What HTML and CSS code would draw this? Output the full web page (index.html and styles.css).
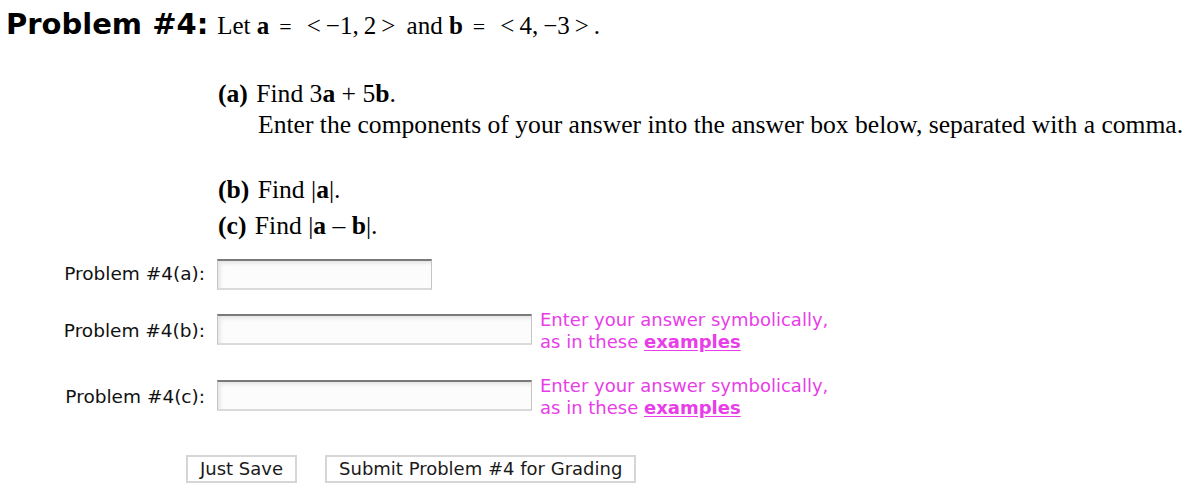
FILE: index.html
```html
<!DOCTYPE html>
<html>
<head>
<meta charset="utf-8">
<link rel="stylesheet" href="styles.css">
</head>
<body>
<div class="page">
  <div class="statement">
    <span class="ptitle">Problem #4:</span>
    <span class="math">Let <b>a</b><span class="eq">=</span><span class="br">&lt;</span>&minus;1,&thinsp;2<span class="br">&gt;</span> and <b>b</b><span class="eq">=</span><span class="br">&lt;</span>4,&thinsp;&minus;3<span class="br">&gt;</span>.</span>
  </div>

  <div class="parts">
    <div class="part part-a">
      <div class="line"><b class="plabel">(a)</b> Find 3<b>a</b> + 5<b>b</b>.</div>
      <div class="line indent">Enter the components of your answer into the answer box below, separated with a comma.</div>
    </div>
    <div class="part part-b">
      <div class="line"><b class="plabel">(b)</b> Find |<b>a</b>|.</div>
    </div>
    <div class="part part-c">
      <div class="line"><b class="plabel">(c)</b> Find |<b>a</b> &ndash; <b>b</b>|.</div>
    </div>
  </div>

  <div class="answers">
    <div class="row row-a">
      <label class="alabel">Problem #4(a):</label>
      <div class="box short"></div>
    </div>
    <div class="row row-b">
      <label class="alabel">Problem #4(b):</label>
      <div class="box long"></div>
      <div class="hint">Enter your answer symbolically,<br>as in these <a class="ex">examples</a></div>
    </div>
    <div class="row row-c">
      <label class="alabel">Problem #4(c):</label>
      <div class="box long"></div>
      <div class="hint">Enter your answer symbolically,<br>as in these <a class="ex">examples</a></div>
    </div>
  </div>

  <div class="buttons">
    <button class="btn">Just Save</button>
    <button class="btn">Submit Problem #4 for Grading</button>
  </div>
</div>
</body>
</html>
```

FILE: styles.css
```css
html, body {
  margin: 0;
  padding: 0;
  background: #ffffff;
  color: #000000;
}

.page {
  width: 1192px;
  height: 492px;
  overflow: hidden;
}

.statement {
  display: flex;
  align-items: baseline;
  gap: 9px;
  box-sizing: border-box;
  height: 46px;
  padding: 7px 0 0 6px;
}

.ptitle {
  font-family: "DejaVu Sans", Verdana, sans-serif;
  font-weight: bold;
  font-size: 29px;
}

.math {
  font-family: "Liberation Serif", "Times New Roman", serif;
  font-size: 25px;
}

.math .eq {
  padding: 0 10px;
  font-size: 22px;
}

.math .br {
  padding: 0 5px;
}

.parts {
  margin: 31.5px 0 0 218px;
  font-family: "Liberation Serif", "Times New Roman", serif;
  font-size: 25.6px;
}

.part .line {
  line-height: 31px;
  white-space: nowrap;
}

.plabel {
  margin-right: 2px;
}

.indent {
  padding-left: 40px;
}

.part-b {
  margin-top: 34px;
}

.part-c {
  margin-top: 5px;
}

.answers {
  margin-top: 18px;
  font-family: "DejaVu Sans", Verdana, sans-serif;
  font-size: 18.5px;
}

.row {
  display: flex;
  align-items: center;
}

.row-b { margin-top: 24px; }
.row-c { margin-top: 35px; }

.alabel {
  width: 205px;
  flex: none;
  text-align: right;
  color: #111;
  position: relative;
  top: 1px;
}

.row-a .alabel {
  top: -1px;
}

.box {
  flex: none;
  margin-left: 12px;
  height: 31px;
  box-sizing: border-box;
  border: 1px solid #c4c4c4;
  border-top: 2px solid #7a7a7a;
  border-bottom: 2px solid #dadada;
  background: #fcfcfc;
  box-shadow: inset 4px 4px 4px -2px #e2e2e2;
}

.short { width: 215px; }
.long { width: 315px; }

.hint {
  align-self: flex-start;
  margin: -5px 0 -8px 8px;
  color: #e83de8;
  font-size: 18px;
  line-height: 22px;
}

.ex {
  color: #e83de8;
  font-weight: bold;
  text-decoration: underline;
  text-underline-offset: 2px;
}

.buttons {
  margin: 44px 0 0 186px;
  display: flex;
  gap: 28px;
}

.btn {
  font-family: "DejaVu Sans", Verdana, sans-serif;
  font-size: 18px;
  color: #1a1a1a;
  background: #ffffff;
  border: 2px solid #d6d6d6;
  height: 28px;
  line-height: 22px;
  padding: 0 12px;
  margin: 0;
}
```
